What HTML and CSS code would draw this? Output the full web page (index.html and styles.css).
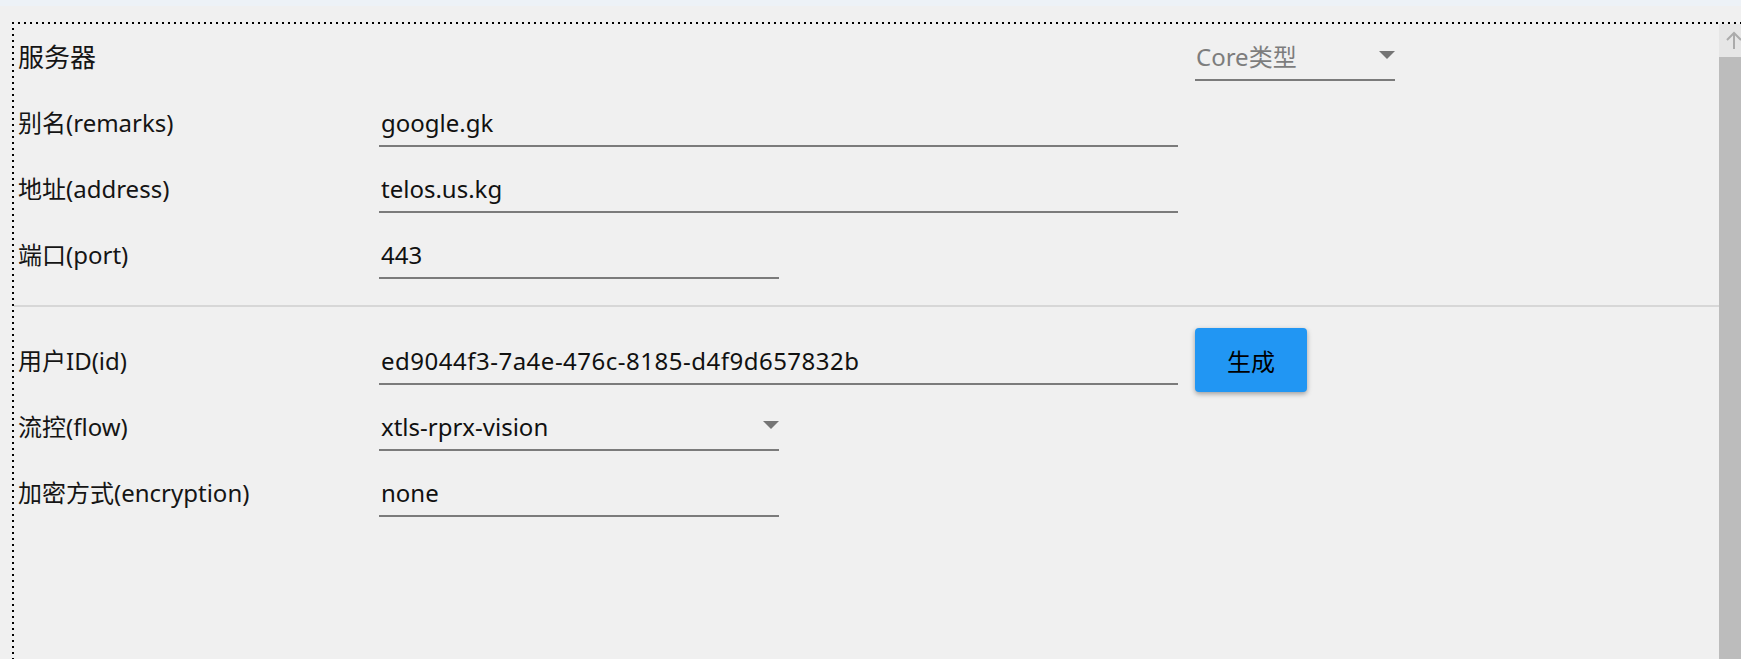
FILE: index.html
```html
<!DOCTYPE html>
<html lang="zh-CN">
<head>
<meta charset="utf-8">
<title>服务器</title>
<link rel="stylesheet" href="styles.css">
</head>
<body>
<div class="top-band"></div>
<div class="frame">
  <div class="content">
    <div class="section first">
      <div class="label heading">服务器</div>
      <div class="cell"></div>
      <div class="field dropdown core">
        <span class="placeholder">Core类型</span>
        <svg class="arrow" width="16" height="8" viewBox="0 0 16 8"><path d="M0 0H16L8 8Z" fill="#757575"/></svg>
      </div>

      <div class="label">别名(remarks)</div>
      <div class="field wide"><span class="value">google.gk</span></div>
      <div class="cell"></div>

      <div class="label">地址(address)</div>
      <div class="field wide"><span class="value">telos.us.kg</span></div>
      <div class="cell"></div>

      <div class="label">端口(port)</div>
      <div class="field narrow"><span class="value">443</span></div>
      <div class="cell"></div>
    </div>

    <div class="separator"></div>

    <div class="section second">
      <div class="label">用户ID(id)</div>
      <div class="field wide"><span class="value uuid">ed9044f3-7a4e-476c-8185-d4f9d657832b</span></div>
      <button class="btn">生成</button>

      <div class="label">流控(flow)</div>
      <div class="field narrow dropdown">
        <span class="value">xtls-rprx-vision</span>
        <svg class="arrow" width="16" height="8" viewBox="0 0 16 8"><path d="M0 0H16L8 8Z" fill="#757575"/></svg>
      </div>
      <div class="cell"></div>

      <div class="label">加密方式(encryption)</div>
      <div class="field narrow"><span class="value">none</span></div>
      <div class="cell"></div>
    </div>
  </div>
  <div class="scrollbar">
    <div class="sb-up">
      <svg width="22" height="33" viewBox="0 0 22 33"><path d="M15 9V25M8 16L15 9L22 16" fill="none" stroke="#ababab" stroke-width="2"/></svg>
    </div>
    <div class="sb-thumb"></div>
  </div>
</div>
</body>
</html>
```

FILE: styles.css
```css
html, body {
  margin: 0;
  padding: 0;
  height: 100%;
  overflow: hidden;
}

body {
  background: #f0f0f0;
  font-family: "Noto Sans", "Noto Sans CJK SC", sans-serif;
  font-size: 24px;
  color: #111;
  display: flex;
  flex-direction: column;
}

.top-band {
  height: 6px;
  background: #edf2f7;
  flex: none;
}

.frame {
  flex: 1;
  margin-top: 16px;
  margin-left: 12px;
  padding-top: 2px;
  padding-left: 2px;
  display: flex;
  background-image:
    repeating-linear-gradient(to right, #000 0 2px, transparent 2px 6px),
    repeating-linear-gradient(to bottom, #000 0 2px, transparent 2px 6px);
  background-size: 100% 2px, 2px 100%;
  background-position: 0 0, 0 0;
  background-repeat: no-repeat;
}

.content {
  flex: 1;
  min-width: 0;
}

.section {
  display: grid;
  grid-template-columns: 361px 816px 200px;
  row-gap: 20px;
  padding-left: 4px;
  align-items: start;
}

.section.first {
  padding-top: 11px;
}

.section.second {
  padding-top: 32px;
}

.separator {
  margin-top: 26px;
  height: 2px;
  background: #d7d7d7;
}

.label {
  height: 44px;
  line-height: 44px;
  white-space: nowrap;
  color: #151515;
}

.label.heading {
  font-size: 26px;
}

.cell {
  height: 46px;
}

.field {
  height: 44px;
  border-bottom: 2px solid #7b7b7b;
  display: flex;
  align-items: center;
  padding-left: 2px;
  box-sizing: content-box;
  line-height: 44px;
  white-space: nowrap;
}

.field.wide {
  width: 797px;
}

.field.narrow {
  width: 398px;
}

.field.core {
  width: 199px;
  padding-left: 1px;
}

.dropdown {
  justify-content: space-between;
}

.arrow {
  flex: none;
  align-self: flex-start;
  margin-top: 16px;
}

.placeholder {
  color: #7d7d7d;
}

.value {
  color: #111;
}

.uuid {
  letter-spacing: 0.5px;
}

.btn {
  width: 112px;
  height: 64px;
  margin: -11px 0 -7px 0;
  border: none;
  border-radius: 4px;
  background: #2196f3;
  color: #000;
  font-family: "Noto Sans", "Noto Sans CJK SC", sans-serif;
  font-size: 24px;
  padding: 0;
  box-shadow: 0 2px 5px rgba(0, 0, 0, 0.35);
}

.scrollbar {
  width: 22px;
  flex: none;
  display: flex;
  flex-direction: column;
}

.sb-up {
  height: 33px;
  background: #e6e6e6;
  flex: none;
}

.sb-up svg {
  display: block;
}

.sb-thumb {
  flex: 1;
  background: #bcbcbc;
}
```
